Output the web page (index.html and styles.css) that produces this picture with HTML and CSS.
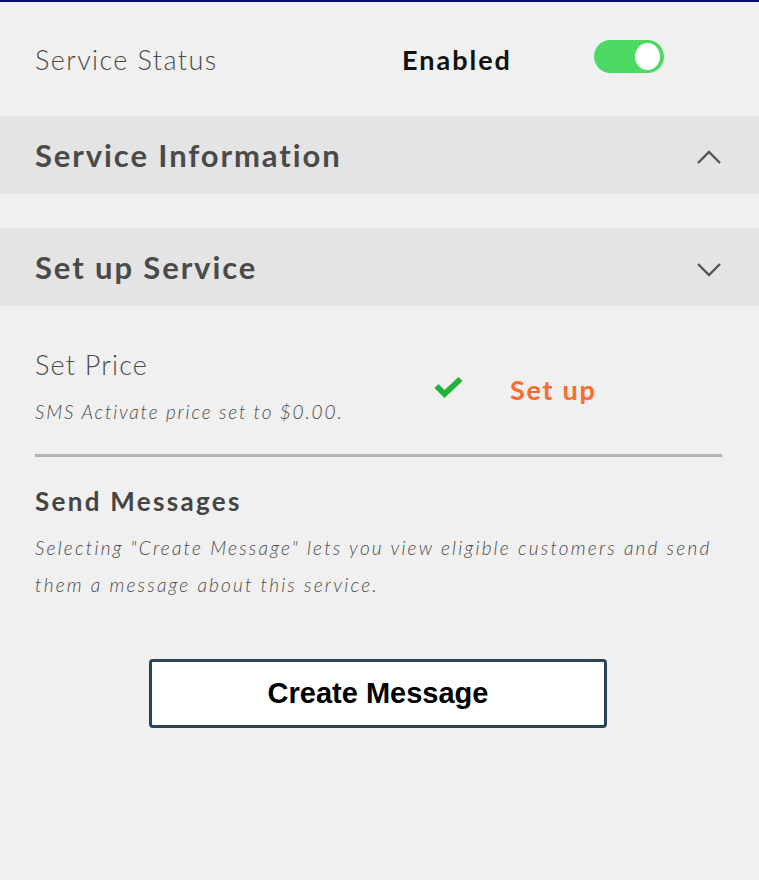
FILE: index.html
```html
<!DOCTYPE html>
<html lang="en">
<head>
    <meta charset="UTF-8">
    <title>Service</title>
    <link rel="stylesheet" href="styles.css">
</head>
<body>
    <div class="panel">
        <div class="status-row">
            <span class="status-label">Service Status</span>
            <span class="status-value">Enabled</span>
            <span class="toggle"><span class="toggle-knob"></span></span>
        </div>

        <div class="section-header">
            <h2>Service Information</h2>
            <svg class="chevron" width="26" height="18" viewBox="0 0 26 18">
                <path d="M2 15 L13 4 L24 15" fill="none" stroke="#555" stroke-width="2.4"/>
            </svg>
        </div>

        <div class="section-header second">
            <h2>Set up Service</h2>
            <svg class="chevron" width="26" height="18" viewBox="0 0 26 18">
                <path d="M2 4 L13 15 L24 4" fill="none" stroke="#555" stroke-width="2.4"/>
            </svg>
        </div>

        <div class="setup-body">
            <div class="price-row">
                <div class="price-info">
                    <div class="price-title">Set Price</div>
                    <div class="price-note">SMS Activate price set to $0.00.</div>
                </div>
                <svg class="check" width="33" height="24" viewBox="0 0 32 24">
                    <path d="M2 12 L6 8 L12 14 L26 1 L30 5 L12 22 Z" fill="#1db33a"/>
                </svg>
                <a class="setup-link">Set up</a>
            </div>

            <div class="messages">
                <h3>Send Messages</h3>
                <p>Selecting "Create Message" lets you view eligible customers and send them a message about this service.</p>
            </div>

            <div class="button-wrap">
                <button class="create-button">Create Message</button>
            </div>
        </div>
    </div>
</body>
</html>
```

FILE: styles.css
```css
* {
    margin: 0;
    padding: 0;
    box-sizing: border-box;
}

body {
    background: #f0f0f0;
    font-family: Lato, "Open Sans", sans-serif;
    color: #444;
    border-top: 2px solid #0b0b6b;
    height: 880px;
}

.status-row {
    display: flex;
    align-items: center;
    height: 114px;
    padding: 0 35px;
}

.status-label {
    width: 367px;
    font-size: 27px;
    font-weight: 300;
    letter-spacing: 1.4px;
    color: #4a4a4a;
}

.status-value {
    width: 192px;
    font-size: 27px;
    font-weight: 700;
    letter-spacing: 2px;
    color: #111;
}

.toggle {
    width: 70px;
    height: 33px;
    margin-top: -6px;
    border-radius: 17px;
    background: #4cd964;
    display: flex;
    align-items: center;
    justify-content: flex-end;
    padding-right: 4px;
}

.toggle-knob {
    width: 25px;
    height: 27px;
    border-radius: 50%;
    background: #fff;
}

.section-header {
    display: flex;
    align-items: center;
    justify-content: space-between;
    height: 78px;
    padding: 0 37px 0 35px;
    background: #e4e4e4;
}

.section-header.second {
    margin-top: 34px;
}

.section-header h2 {
    font-size: 31px;
    font-weight: 700;
    letter-spacing: 1.9px;
    color: #4a4a4a;
}

.chevron {
    margin-top: 4px;
}

.setup-body {
    padding: 0 37px 0 35px;
}

.price-row {
    display: flex;
    align-items: center;
    padding: 42px 0 31px;
    border-bottom: 3px solid #b2b2b2;
}

.price-info {
    width: 397px;
}

.price-title {
    font-size: 27px;
    font-weight: 300;
    letter-spacing: 1.2px;
    color: #4a4a4a;
}

.price-note {
    margin-top: 19px;
    font-size: 19px;
    font-style: italic;
    font-weight: 300;
    letter-spacing: 1.8px;
    color: #4a4a4a;
}

.check {
    margin-top: 4px;
}

.setup-link {
    margin-left: 45px;
    margin-top: 8px;
    font-size: 27px;
    font-weight: 700;
    letter-spacing: 1.7px;
    color: #ff6b2b;
}

.messages {
    padding-top: 28px;
}

.messages h3 {
    font-size: 26px;
    font-weight: 700;
    letter-spacing: 2.3px;
    color: #444;
}

.messages p {
    margin-top: 12px;
    font-size: 19px;
    font-style: italic;
    font-weight: 300;
    letter-spacing: 2.2px;
    line-height: 37px;
    color: #4a4a4a;
}

.button-wrap {
    padding: 56px 0 0 114px;
}

.create-button {
    width: 458px;
    height: 69px;
    background: #fff;
    border: 3px solid #2d4356;
    border-radius: 4px;
    font-family: "Liberation Sans", Arial, sans-serif;
    font-size: 29px;
    font-weight: 700;
    color: #000;
}
```
